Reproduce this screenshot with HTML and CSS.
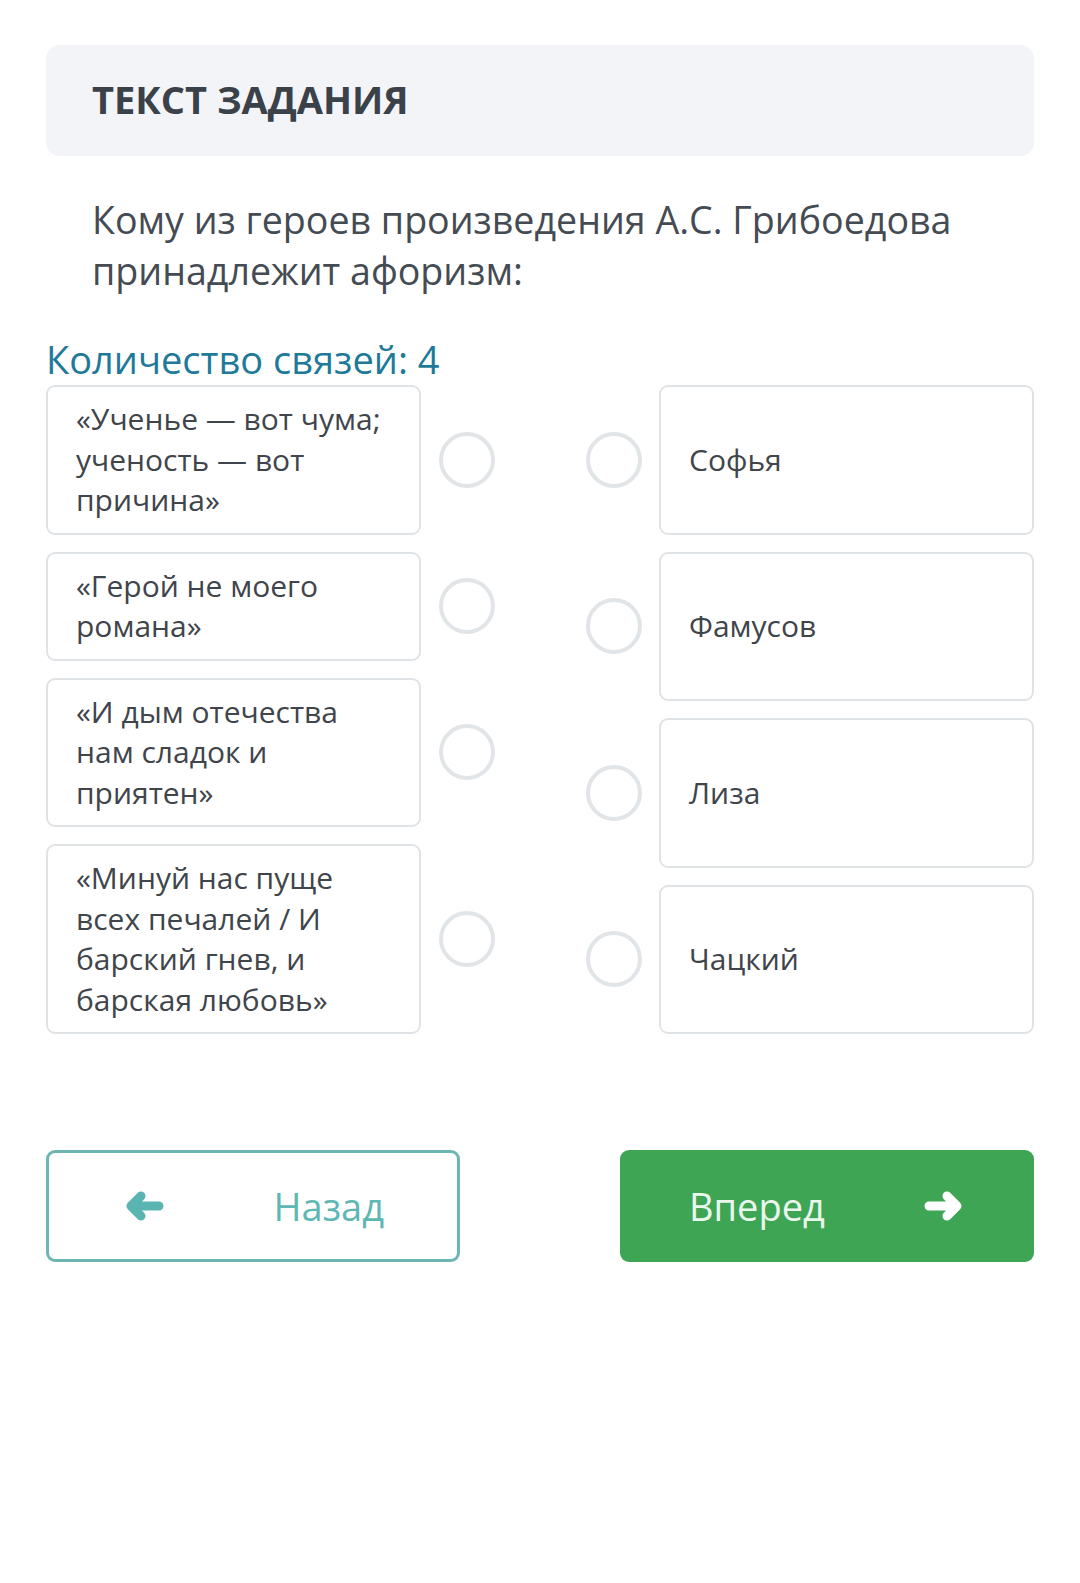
FILE: index.html
```html
<!DOCTYPE html>
<html lang="ru">
<head>
  <meta charset="UTF-8" />
  <title>Текст задания</title>
  <link rel="stylesheet" href="styles.css">
</head>
<body>
  <div class="page">
    <div class="task-head">
      <h1>ТЕКСТ ЗАДАНИЯ</h1>
    </div>

    <p class="question">Кому из героев произведения А.С. Грибоедова принадлежит афоризм:</p>

    <div class="count">Количество связей: 4</div>

    <div class="match">
      <div class="col col-left">
        <div class="row">
          <div class="card">«Ученье — вот чума; ученость — вот причина»</div>
          <span class="dot"></span>
        </div>
        <div class="row">
          <div class="card">«Герой не моего романа»</div>
          <span class="dot"></span>
        </div>
        <div class="row">
          <div class="card">«И дым отечества нам сладок и приятен»</div>
          <span class="dot"></span>
        </div>
        <div class="row">
          <div class="card">«Минуй нас пуще всех печалей / И барский гнев, и барская любовь»</div>
          <span class="dot"></span>
        </div>
      </div>

      <div class="col col-right">
        <div class="row">
          <span class="dot"></span>
          <div class="card">Софья</div>
        </div>
        <div class="row">
          <span class="dot"></span>
          <div class="card">Фамусов</div>
        </div>
        <div class="row">
          <span class="dot"></span>
          <div class="card">Лиза</div>
        </div>
        <div class="row">
          <span class="dot"></span>
          <div class="card">Чацкий</div>
        </div>
      </div>
    </div>

    <div class="nav">
      <button class="btn btn-back">
        <svg class="arrow" viewBox="0 0 40 32" width="40" height="32">
          <path d="M34 16H7M16 6L6 16l10 10" fill="none" stroke="currentColor" stroke-width="9" stroke-linecap="round" stroke-linejoin="round"/>
        </svg>
        <span>Назад</span>
      </button>
      <button class="btn btn-next">
        <span>Вперед</span>
        <svg class="arrow" viewBox="0 0 40 32" width="40" height="32">
          <path d="M6 16h27M24 6l10 10-10 10" fill="none" stroke="currentColor" stroke-width="9" stroke-linecap="round" stroke-linejoin="round"/>
        </svg>
      </button>
    </div>
  </div>
</body>
</html>
```

FILE: styles.css
```css
body {
  margin: 0;
  background: #fff;
  font-family: 'Open Sans', 'Noto Sans', sans-serif;
  color: #41474e;
}
.page {
  width: 988px;
  margin: 0 auto;
  padding-top: 45px;
}
.task-head {
  height: 111px;
  box-sizing: border-box;
  background: #f2f4f7;
  border-radius: 14px;
  padding: 0 0 4px 46px;
  display: flex;
  align-items: center;
}
.task-head h1 {
  margin: 0;
  font-size: 38px;
  font-weight: 700;
  color: #3a4149;
}
.question {
  margin: 38px 0 0;
  padding-left: 46px;
  font-size: 37.6px;
  line-height: 51px;
  color: #454b52;
}
.count {
  margin-top: 41px;
  font-size: 38px;
  line-height: 44px;
  color: #1f7a9a;
}
.match {
  display: flex;
  justify-content: space-between;
  margin-top: 4px;
}
.col {
  display: flex;
  flex-direction: column;
  gap: 17px;
}
.row {
  display: flex;
  align-items: center;
  gap: 18px;
}
.col-right .row {
  flex: 1 1 0;
  align-items: stretch;
  gap: 17px;
}
.col-right .dot {
  align-self: center;
}
.card {
  width: 375px;
  box-sizing: border-box;
  border: 2px solid #e0e3e6;
  border-radius: 9px;
  padding: 12px 26px 12px 28px;
  font-size: 30px;
  line-height: 40.5px;
  color: #3f454b;
}
.col-right .card {
  display: flex;
  align-items: center;
}
.dot {
  width: 56px;
  height: 56px;
  box-sizing: border-box;
  border: 4px solid #e2e5e8;
  border-radius: 50%;
  flex-shrink: 0;
}
.nav {
  display: flex;
  justify-content: space-between;
  margin-top: 116px;
}
.btn {
  width: 414px;
  height: 112px;
  box-sizing: border-box;
  border-radius: 9px;
  display: flex;
  align-items: center;
  justify-content: space-between;
  font-family: inherit;
  font-size: 38px;
  cursor: pointer;
}
.btn-back {
  background: #fff;
  border: 3px solid #6db6b4;
  color: #5db7b2;
  padding: 0 73px 0 76px;
}
.btn-next {
  background: #3ea555;
  border: none;
  color: #eaf7ec;
  padding: 0 71px 0 69px;
}
.btn-back .arrow {
  color: #5ab5b2;
}
.btn-next .arrow {
  color: #fff;
}
```
